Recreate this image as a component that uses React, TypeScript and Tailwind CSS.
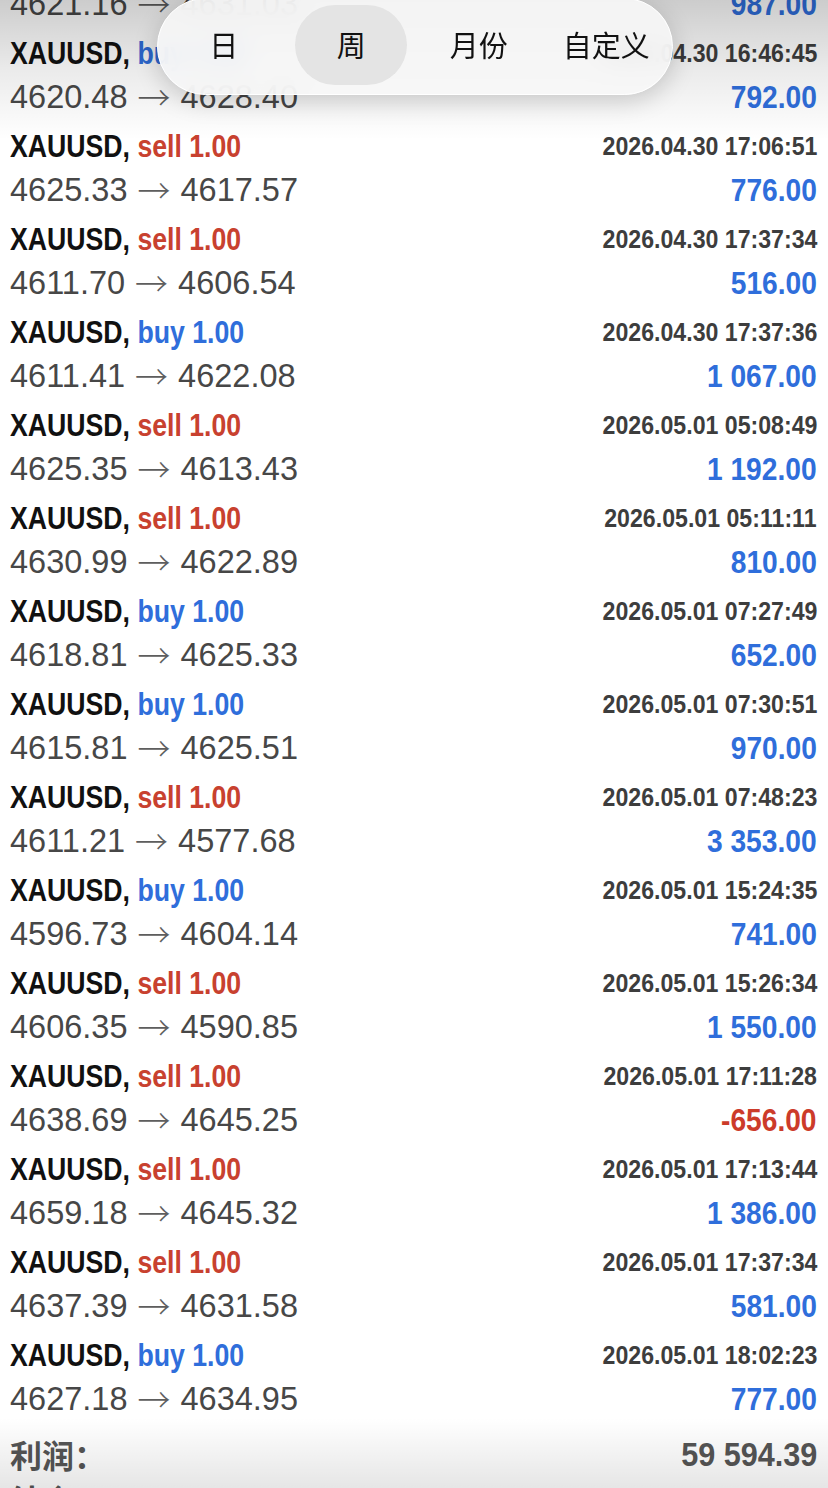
import React from "react";

type Row = {
  side: "buy" | "sell";
  time: string;
  open: string;
  close: string;
  profit: string;
};

const rows: Row[] = [
  { side: "buy", time: "2026.04.30 16:21:10", open: "4621.16", close: "4631.03", profit: "987.00" },
  { side: "buy", time: "2026.04.30 16:46:45", open: "4620.48", close: "4628.40", profit: "792.00" },
  { side: "sell", time: "2026.04.30 17:06:51", open: "4625.33", close: "4617.57", profit: "776.00" },
  { side: "sell", time: "2026.04.30 17:37:34", open: "4611.70", close: "4606.54", profit: "516.00" },
  { side: "buy", time: "2026.04.30 17:37:36", open: "4611.41", close: "4622.08", profit: "1 067.00" },
  { side: "sell", time: "2026.05.01 05:08:49", open: "4625.35", close: "4613.43", profit: "1 192.00" },
  { side: "sell", time: "2026.05.01 05:11:11", open: "4630.99", close: "4622.89", profit: "810.00" },
  { side: "buy", time: "2026.05.01 07:27:49", open: "4618.81", close: "4625.33", profit: "652.00" },
  { side: "buy", time: "2026.05.01 07:30:51", open: "4615.81", close: "4625.51", profit: "970.00" },
  { side: "sell", time: "2026.05.01 07:48:23", open: "4611.21", close: "4577.68", profit: "3 353.00" },
  { side: "buy", time: "2026.05.01 15:24:35", open: "4596.73", close: "4604.14", profit: "741.00" },
  { side: "sell", time: "2026.05.01 15:26:34", open: "4606.35", close: "4590.85", profit: "1 550.00" },
  { side: "sell", time: "2026.05.01 17:11:28", open: "4638.69", close: "4645.25", profit: "-656.00" },
  { side: "sell", time: "2026.05.01 17:13:44", open: "4659.18", close: "4645.32", profit: "1 386.00" },
  { side: "sell", time: "2026.05.01 17:37:34", open: "4637.39", close: "4631.58", profit: "581.00" },
  { side: "buy", time: "2026.05.01 18:02:23", open: "4627.18", close: "4634.95", profit: "777.00" },
];

const font = { fontFamily: '"Liberation Sans", Arial, sans-serif' };
const cjk = { fontFamily: '"Noto Sans CJK SC", "Noto Sans", sans-serif' };

function TradeRow({ r }: { r: Row }) {
  const neg = r.profit.startsWith("-");
  return (
    <div className="flex flex-col" style={font}>
      <div className="h-[46px] flex items-center justify-between pl-[10px] pr-[11px]">
        <span className="inline-block origin-left scale-x-[0.86] text-[31px] font-bold whitespace-nowrap leading-none text-[#111111]">
          XAUUSD,{" "}
          <span className={r.side === "sell" ? "text-[#c8412f]" : "text-[#2f6edb]"}>
            {r.side} 1.00
          </span>
        </span>
        <span className="inline-block origin-right scale-x-[0.89] text-[26px] font-bold whitespace-nowrap leading-none text-[#3d3d3d]">
          {r.time}
        </span>
      </div>
      <div className="h-[47px] pb-[5px] flex items-center justify-between pl-[10px] pr-[11px]">
        <span className="flex items-center text-[32.5px] whitespace-nowrap leading-none text-[#474747]">
          <span>{r.open}</span>
          <span
            className="inline-block mx-[10px] text-[33px] font-light leading-none text-[#5e5e5e] -translate-y-[1px]"
            style={cjk}
          >
            →
          </span>
          <span>{r.close}</span>
        </span>
        <span
          className={
            "inline-block origin-right scale-x-[0.88] text-[32px] font-bold whitespace-nowrap leading-none " +
            (neg ? "text-[#cc3b2a]" : "text-[#2f6edb]")
          }
        >
          {r.profit}
        </span>
      </div>
    </div>
  );
}

export default function App() {
  const tabs = ["日", "周", "月份", "自定义"];
  return (
    <div className="relative w-[828px] h-[1488px] overflow-hidden bg-white">
      <div className="mt-[-63px] flex flex-col">
        {rows.map((r, i) => (
          <TradeRow key={i} r={r} />
        ))}
        <div className="h-[58px] flex items-center justify-between pl-[10px] pr-[11px]">
          <span className="text-[32px] font-bold leading-none text-[#555555]" style={cjk}>
            利润：
          </span>
          <span
            className="inline-block origin-right scale-x-[0.9] text-[34px] font-bold leading-none whitespace-nowrap text-[#555555]"
            style={font}
          >
            59 594.39
          </span>
        </div>
        <div className="h-[50px] flex items-start justify-between pl-[10px] pr-[11px]">
          <span className="text-[32px] font-bold leading-none text-[#555555]" style={cjk}>
            结余：
          </span>
        </div>
      </div>

      {/* top blur/shade */}
      <div className="pointer-events-none absolute inset-x-0 top-0 h-[140px] bg-gradient-to-b from-black/20 via-black/8 to-transparent" />
      {/* bottom shade */}
      <div className="pointer-events-none absolute inset-x-0 bottom-0 h-[70px] bg-gradient-to-b from-transparent to-black/10" />

      {/* segmented popover */}
      <div className="absolute left-[157px] top-[-2px] w-[516px] h-[97px] rounded-full bg-[#f7f7f7]/90 backdrop-blur-md border border-white shadow-[0_6px_24px_rgba(0,0,0,0.18)] grid grid-cols-4 items-center px-[2px]">
        {tabs.map((t, i) => (
          <div key={t} className="flex items-center justify-center">
            <div
              className={
                "flex items-center justify-center h-[80px] w-[112px] rounded-full text-[29px] text-[#111111] -translate-y-[2px] " +
                (i === 1 ? "bg-[#e4e4e4]" : "")
              }
              style={cjk}
            >
              {t}
            </div>
          </div>
        ))}
      </div>
    </div>
  );
}
